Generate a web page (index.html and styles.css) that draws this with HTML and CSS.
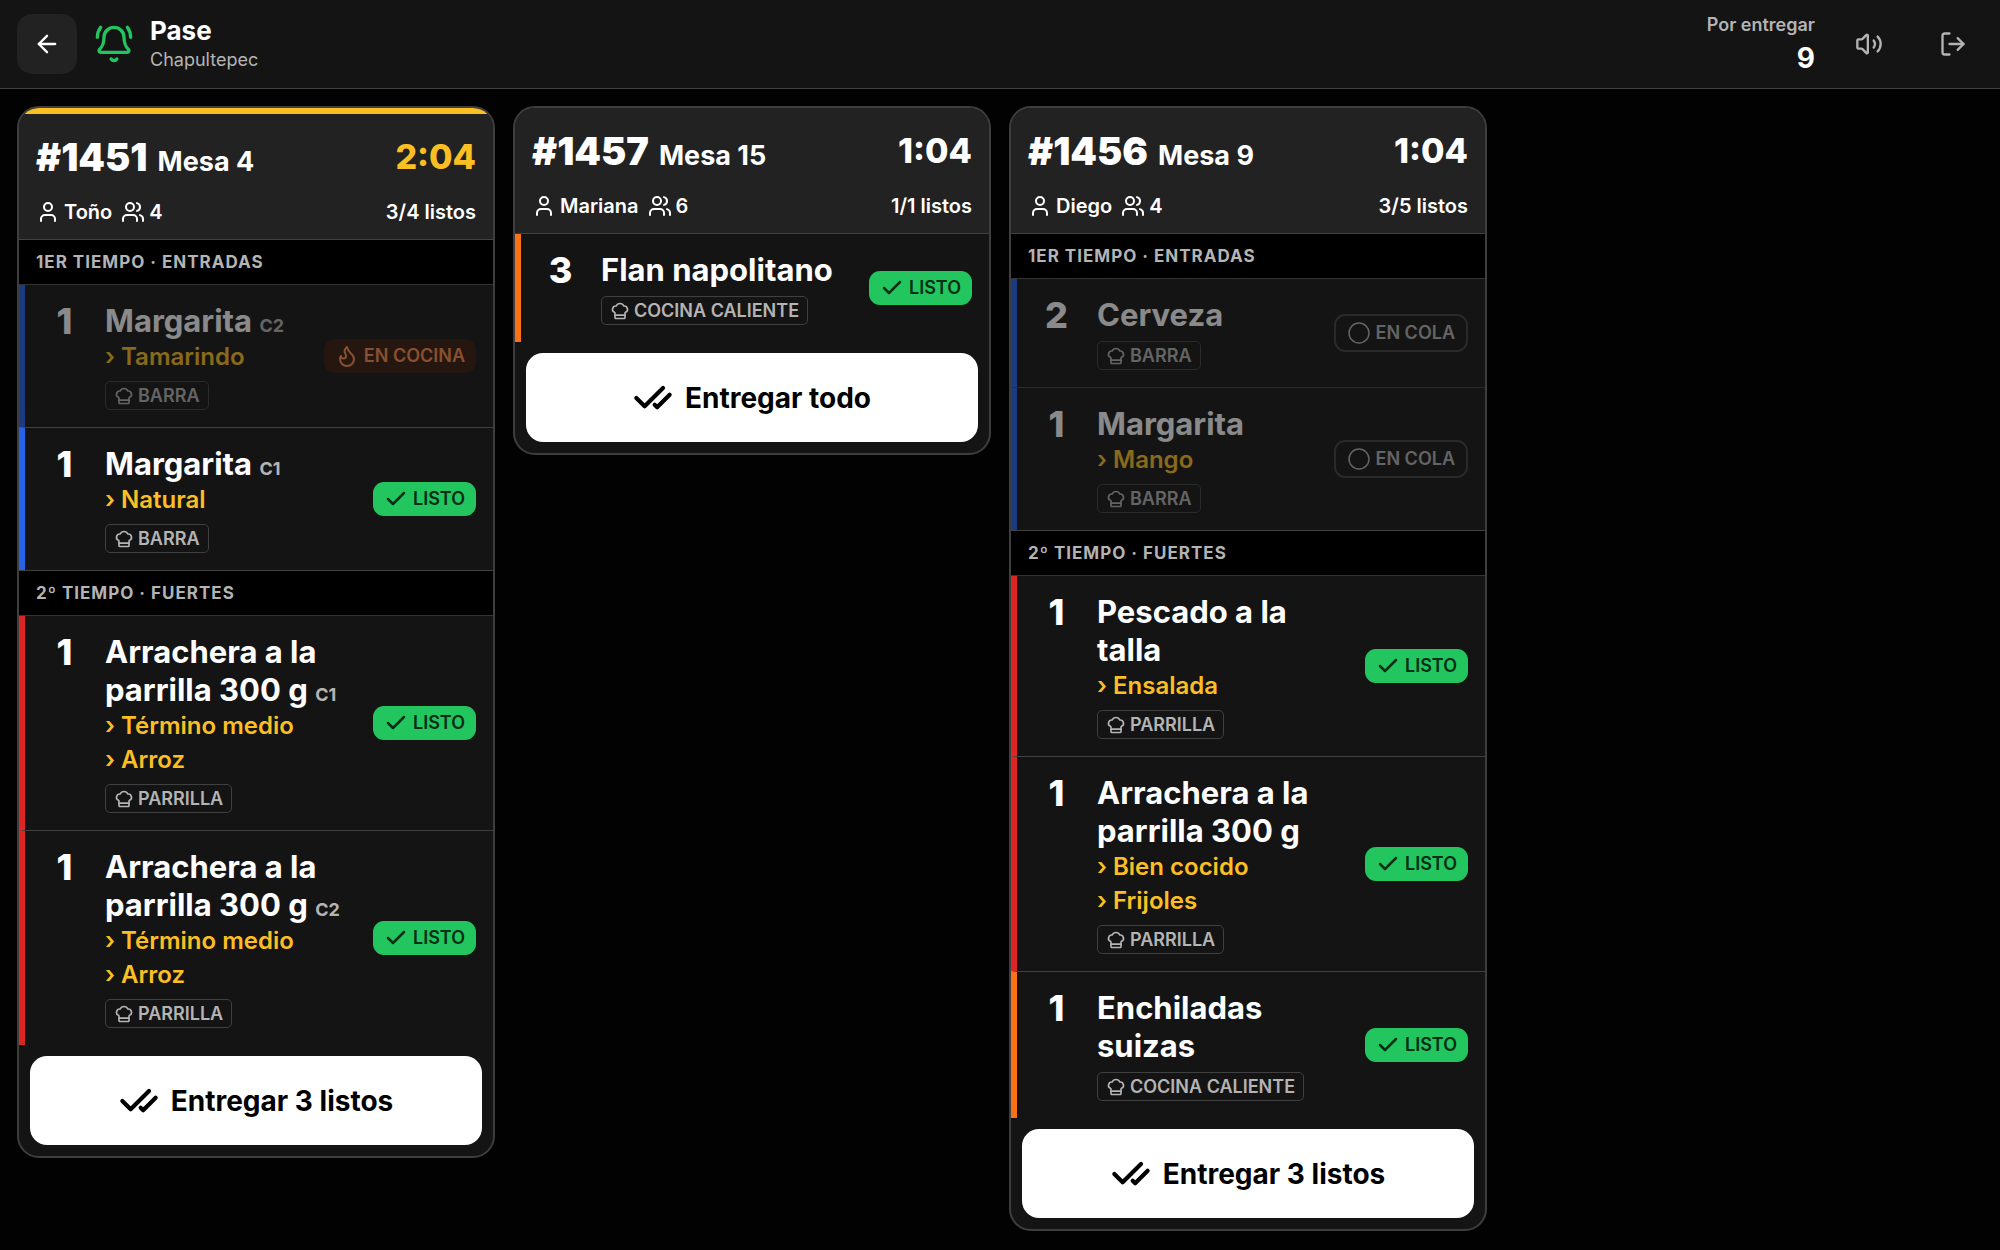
FILE: index.html
```
<!DOCTYPE html>
<html lang="es">
<head>
	<title>Pase - Chapultepec</title>
	<meta charset="utf-8">
	<meta name="viewport" content="width=device-width, initial-scale=1">
	<link rel="stylesheet" href="styles.css">
</head>
<body>
	<!-- Iconos -->
	<svg class="sprite" aria-hidden="true">
		<symbol id="i-back" viewBox="0 0 24 24"><path d="m12 19-7-7 7-7"/><path d="M19 12H5"/></symbol>
		<symbol id="i-bell" viewBox="0 0 24 24"><path d="M10.3 21a2 2 0 0 0 3.4 0"/><path d="M22 8c0-2.3-.8-4.3-2-6"/><path d="M4 2C2.8 3.7 2 5.7 2 8"/><path d="M3.262 15.326A1 1 0 0 0 4 17h16a1 1 0 0 0 .74-1.673C19.41 13.956 18 12.499 18 8A6 6 0 0 0 6 8c0 4.499-1.411 5.956-2.738 7.326"/></symbol>
		<symbol id="i-volume" viewBox="0 0 24 24"><path d="M11 4.702a.705.705 0 0 0-1.203-.498L6.413 7.587A1.4 1.4 0 0 1 5.416 8H3a1 1 0 0 0-1 1v6a1 1 0 0 0 1 1h2.416a1.4 1.4 0 0 1 .997.413l3.383 3.384A.705.705 0 0 0 11 19.298z"/><path d="M16 9a5 5 0 0 1 0 6"/><path d="M19.364 18.364a9 9 0 0 0 0-12.728"/></symbol>
		<symbol id="i-logout" viewBox="0 0 24 24"><path d="M9 21H5a2 2 0 0 1-2-2V5a2 2 0 0 1 2-2h4"/><path d="m16 17 5-5-5-5"/><path d="M21 12H9"/></symbol>
		<symbol id="i-user" viewBox="0 0 24 24"><path d="M19 21v-2a4 4 0 0 0-4-4H9a4 4 0 0 0-4 4v2"/><circle cx="12" cy="7" r="4"/></symbol>
		<symbol id="i-users" viewBox="0 0 24 24"><path d="M16 21v-2a4 4 0 0 0-4-4H6a4 4 0 0 0-4 4v2"/><circle cx="9" cy="7" r="4"/><path d="M16 3.13a4 4 0 0 1 0 7.75"/><path d="M22 21v-2a4 4 0 0 0-3-3.87"/></symbol>
		<symbol id="i-chef" viewBox="0 0 24 24"><path d="M17 21a1 1 0 0 0 1-1v-5.35c0-.457.316-.844.727-1.041a4 4 0 0 0-2.134-7.589 5 5 0 0 0-9.186 0 4 4 0 0 0-2.134 7.588c.411.198.727.585.727 1.041V20a1 1 0 0 0 1 1Z"/><path d="M6 17h12"/></symbol>
		<symbol id="i-check" viewBox="0 0 24 24"><path d="M20 6 9 17l-5-5"/></symbol>
		<symbol id="i-checks" viewBox="0 0 24 24"><path d="M18 6 7 17l-5-5"/><path d="m22 10-7.5 7.5L13 16"/></symbol>
		<symbol id="i-flame" viewBox="0 0 24 24"><path d="M8.5 14.5A2.5 2.5 0 0 0 11 12c0-1.38-.5-2-1-3-1.072-2.143-.224-4.054 2-6 .5 2.5 2 4.9 4 6.5 2 1.6 3 3.5 3 5.5a7 7 0 1 1-14 0c0-1.153.433-2.294 1-3a2.5 2.5 0 0 0 2.5 2.5z"/></symbol>
		<symbol id="i-circle" viewBox="0 0 24 24"><circle cx="12" cy="12" r="10"/></symbol>
	</svg>

	<header class="topbar">
		<button class="back" type="button" aria-label="Volver"><svg class="icon icon-md"><use href="#i-back"/></svg></button>
		<svg class="icon icon-lg bell"><use href="#i-bell"/></svg>
		<div class="place">
			<h1>Pase</h1>
			<p>Chapultepec</p>
		</div>
		<div class="pending">
			<span>Por entregar</span>
			<strong>9</strong>
		</div>
		<button class="tool" type="button" aria-label="Sonido"><svg class="icon icon-md"><use href="#i-volume"/></svg></button>
		<button class="tool" type="button" aria-label="Salir"><svg class="icon icon-md"><use href="#i-logout"/></svg></button>
	</header>

	<main class="board">
		<article class="ticket late">
			<header class="ticket-head">
				<div class="row">
					<h2><span class="number">#1451</span> Mesa 4</h2>
					<time class="timer">2:04</time>
				</div>
				<div class="row meta">
					<span class="who"><svg class="icon"><use href="#i-user"/></svg>Toño</span>
					<span class="guests"><svg class="icon"><use href="#i-users"/></svg>4</span>
					<span class="ready">3/4 listos</span>
				</div>
			</header>
			<h3 class="course">1ER TIEMPO · ENTRADAS</h3>
			<div class="item barra waiting">
				<span class="qty">1</span>
				<div class="info">
					<div class="name">Margarita <small>C2</small></div>
					<div class="mod">› Tamarindo</div>
					<span class="station"><svg class="icon"><use href="#i-chef"/></svg>BARRA</span>
				</div>
				<span class="badge cooking"><svg class="icon"><use href="#i-flame"/></svg>EN COCINA</span>
			</div>
			<div class="item barra">
				<span class="qty">1</span>
				<div class="info">
					<div class="name">Margarita <small>C1</small></div>
					<div class="mod">› Natural</div>
					<span class="station"><svg class="icon"><use href="#i-chef"/></svg>BARRA</span>
				</div>
				<span class="badge done"><svg class="icon"><use href="#i-check"/></svg>LISTO</span>
			</div>
			<h3 class="course">2º TIEMPO · FUERTES</h3>
			<div class="item parrilla">
				<span class="qty">1</span>
				<div class="info">
					<div class="name">Arrachera a la parrilla 300 g <small>C1</small></div>
					<div class="mod">› Término medio</div>
					<div class="mod">› Arroz</div>
					<span class="station"><svg class="icon"><use href="#i-chef"/></svg>PARRILLA</span>
				</div>
				<span class="badge done"><svg class="icon"><use href="#i-check"/></svg>LISTO</span>
			</div>
			<div class="item parrilla">
				<span class="qty">1</span>
				<div class="info">
					<div class="name">Arrachera a la parrilla 300 g <small>C2</small></div>
					<div class="mod">› Término medio</div>
					<div class="mod">› Arroz</div>
					<span class="station"><svg class="icon"><use href="#i-chef"/></svg>PARRILLA</span>
				</div>
				<span class="badge done"><svg class="icon"><use href="#i-check"/></svg>LISTO</span>
			</div>
			<button class="deliver" type="button"><svg class="icon icon-lg"><use href="#i-checks"/></svg>Entregar 3 listos</button>
		</article>

		<article class="ticket">
			<header class="ticket-head">
				<div class="row">
					<h2><span class="number">#1457</span> Mesa 15</h2>
					<time class="timer">1:04</time>
				</div>
				<div class="row meta">
					<span class="who"><svg class="icon"><use href="#i-user"/></svg>Mariana</span>
					<span class="guests"><svg class="icon"><use href="#i-users"/></svg>6</span>
					<span class="ready">1/1 listos</span>
				</div>
			</header>
			<div class="item caliente">
				<span class="qty">3</span>
				<div class="info">
					<div class="name">Flan napolitano</div>
					<span class="station"><svg class="icon"><use href="#i-chef"/></svg>COCINA CALIENTE</span>
				</div>
				<span class="badge done"><svg class="icon"><use href="#i-check"/></svg>LISTO</span>
			</div>
			<button class="deliver" type="button"><svg class="icon icon-lg"><use href="#i-checks"/></svg>Entregar todo</button>
		</article>

		<article class="ticket">
			<header class="ticket-head">
				<div class="row">
					<h2><span class="number">#1456</span> Mesa 9</h2>
					<time class="timer">1:04</time>
				</div>
				<div class="row meta">
					<span class="who"><svg class="icon"><use href="#i-user"/></svg>Diego</span>
					<span class="guests"><svg class="icon"><use href="#i-users"/></svg>4</span>
					<span class="ready">3/5 listos</span>
				</div>
			</header>
			<h3 class="course">1ER TIEMPO · ENTRADAS</h3>
			<div class="item barra waiting">
				<span class="qty">2</span>
				<div class="info">
					<div class="name">Cerveza</div>
					<span class="station"><svg class="icon"><use href="#i-chef"/></svg>BARRA</span>
				</div>
				<span class="badge queued"><svg class="icon"><use href="#i-circle"/></svg>EN COLA</span>
			</div>
			<div class="item barra waiting">
				<span class="qty">1</span>
				<div class="info">
					<div class="name">Margarita</div>
					<div class="mod">› Mango</div>
					<span class="station"><svg class="icon"><use href="#i-chef"/></svg>BARRA</span>
				</div>
				<span class="badge queued"><svg class="icon"><use href="#i-circle"/></svg>EN COLA</span>
			</div>
			<h3 class="course">2º TIEMPO · FUERTES</h3>
			<div class="item parrilla">
				<span class="qty">1</span>
				<div class="info">
					<div class="name">Pescado a la talla</div>
					<div class="mod">› Ensalada</div>
					<span class="station"><svg class="icon"><use href="#i-chef"/></svg>PARRILLA</span>
				</div>
				<span class="badge done"><svg class="icon"><use href="#i-check"/></svg>LISTO</span>
			</div>
			<div class="item parrilla">
				<span class="qty">1</span>
				<div class="info">
					<div class="name">Arrachera a la parrilla 300 g</div>
					<div class="mod">› Bien cocido</div>
					<div class="mod">› Frijoles</div>
					<span class="station"><svg class="icon"><use href="#i-chef"/></svg>PARRILLA</span>
				</div>
				<span class="badge done"><svg class="icon"><use href="#i-check"/></svg>LISTO</span>
			</div>
			<div class="item caliente">
				<span class="qty">1</span>
				<div class="info">
					<div class="name">Enchiladas suizas</div>
					<span class="station"><svg class="icon"><use href="#i-chef"/></svg>COCINA CALIENTE</span>
				</div>
				<span class="badge done"><svg class="icon"><use href="#i-check"/></svg>LISTO</span>
			</div>
			<button class="deliver" type="button"><svg class="icon icon-lg"><use href="#i-checks"/></svg>Entregar 3 listos</button>
		</article>
	</main>
</body>
</html>
```
FILE: styles.css
```
* {
	box-sizing: border-box;
}
body {
	margin: 0;
	background-color: #020202;
	color: #fff;
	font-family: Inter, "Liberation Sans", sans-serif;
	font-size: 18px;
}
h1, h2, h3, p {
	margin: 0;
}
button {
	border: none;
	font-family: inherit;
	cursor: pointer;
}

/* Iconos */
.sprite {
	display: none;
}
.icon {
	width: 24px;
	height: 24px;
	flex-shrink: 0;
	fill: none;
	stroke: currentColor;
	stroke-width: 2;
	stroke-linecap: round;
	stroke-linejoin: round;
}
.icon-md {
	width: 28px;
	height: 28px;
}
.icon-lg {
	width: 40px;
	height: 40px;
}

/* Barra superior */
.topbar {
	display: flex;
	align-items: center;
	padding: 14px 17px;
	background-color: #141414;
	border-bottom: 1px solid #404040;
}
.back, .tool {
	display: flex;
	align-items: center;
	justify-content: center;
	width: 60px;
	height: 60px;
	padding: 0;
	border-radius: 15px;
}
.back {
	background-color: #222;
	color: #fff;
}
.tool {
	margin-left: 24px;
	background: none;
	color: #b4b4b4;
}
.bell {
	margin: 0 16px 0 17px;
	color: #22c55e;
}
.place {
	padding-top: 2px;
}
.place h1 {
	font-size: 26px;
	line-height: 30px;
	font-weight: 700;
}
.place p {
	line-height: 28px;
	color: #b4b4b4;
}
.pending {
	display: flex;
	flex-direction: column;
	align-items: flex-end;
	margin: -4px 0 -4px auto;
}
.pending span {
	line-height: 28px;
	font-weight: 600;
	color: #b4b4b4;
}
.pending strong {
	font-size: 28px;
	line-height: 38px;
}

/* Tablero */
.board {
	display: grid;
	grid-template-columns: repeat(auto-fill, minmax(400px, 1fr));
	align-items: start;
	gap: 18px;
	padding: 17px;
}
.ticket {
	overflow: hidden;
	background-color: #141414;
	border: 2px solid #3e3e3e;
	border-radius: 22px;
}
.ticket-head {
	padding: 16px 17px 12px;
	background-color: #222;
	border-bottom: 1px solid #404040;
}
.late .ticket-head {
	border-top: 6px solid #fbbf24;
}
.row {
	display: flex;
	align-items: center;
	justify-content: space-between;
}
.row h2 {
	display: flex;
	align-items: baseline;
	gap: 10px;
	height: 54px;
	font-size: 27px;
	line-height: 54px;
	font-weight: 700;
}
.number {
	font-size: 38px;
	line-height: 54px;
	font-weight: 900;
}
.timer {
	font-size: 34px;
	line-height: 54px;
	font-weight: 800;
}
.late .timer {
	color: #fbbf24;
}
.meta {
	margin-top: 13px;
	font-size: 20px;
	line-height: 30px;
	font-weight: 600;
}
.who, .guests {
	display: flex;
	align-items: center;
	gap: 4px;
	margin-right: 9px;
}
.ready {
	margin-left: auto;
}
.course {
	padding: 0 17px;
	background-color: #000;
	border-bottom: 1px solid #333;
	font-size: 17px;
	line-height: 44px;
	font-weight: 700;
	letter-spacing: 1px;
	color: #b4b4b4;
}

/* Platillos */
.item {
	display: flex;
	align-items: center;
	gap: 18px;
	padding: 17px;
	border-left: 6px solid #f97316;
}
.item + .item, .item + .course {
	border-top: 1px solid #404040;
}
.barra {
	border-left-color: #2563eb;
}
.parrilla {
	border-left-color: #dc2626;
}
.waiting {
	opacity: 0.5;
}
.qty {
	align-self: flex-start;
	width: 45px;
	font-size: 36px;
	line-height: 38px;
	font-weight: 800;
	text-align: center;
}
.info {
	flex: 1;
	min-width: 0;
}
.name {
	font-size: 31px;
	line-height: 38px;
	font-weight: 700;
}
.name small {
	font-size: 18px;
	line-height: 18px;
	font-weight: 700;
	color: #b4b4b4;
}
.mod {
	font-size: 24px;
	line-height: 34px;
	font-weight: 600;
	color: #fbbf24;
}
.station {
	display: flex;
	align-items: center;
	gap: 4px;
	width: fit-content;
	margin-top: 7px;
	padding: 0 8px;
	border: 1px solid #404040;
	border-radius: 5px;
	line-height: 27px;
	font-weight: 600;
	color: #b4b4b4;
}
.station .icon {
	width: 20px;
	height: 20px;
}
.badge {
	display: flex;
	align-items: center;
	gap: 5px;
	padding: 0 11px;
	border-radius: 11px;
	line-height: 34px;
	font-weight: 600;
	white-space: nowrap;
}
.done {
	background-color: #22c55e;
	color: #052e16;
}
.done .icon, .deliver .icon {
	stroke-width: 2.5;
}
.cooking {
	background-color: #37190b;
	color: #fb8c4c;
}
.queued {
	border: 2px solid #404040;
	color: #b4b4b4;
}
.queued .icon {
	stroke-width: 1.5;
}
.deliver {
	display: flex;
	align-items: center;
	justify-content: center;
	gap: 12px;
	width: calc(100% - 22px);
	height: 89px;
	margin: 11px;
	border-radius: 17px;
	background-color: #fff;
	color: #000;
	font-size: 28px;
	font-weight: 700;
}
```
